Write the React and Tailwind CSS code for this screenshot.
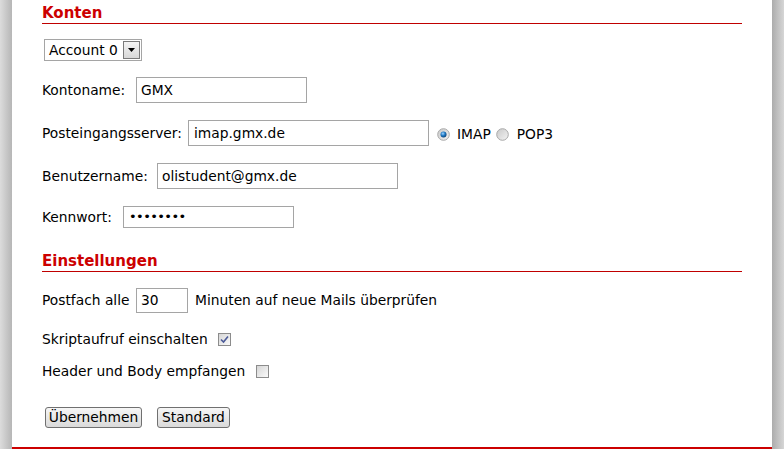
import React from "react";

const font = { fontFamily: '"DejaVu Sans", Verdana, sans-serif' };

function Radio({ checked }) {
  return (
    <svg width="13" height="13" viewBox="0 0 13 13" className="shrink-0">
      <defs>
        <linearGradient id={checked ? "rg1" : "rg2"} x1="0" y1="0" x2="1" y2="1">
          <stop offset="0" stopColor="#c8c8c8" />
          <stop offset="1" stopColor="#f4f4f4" />
        </linearGradient>
        <radialGradient id="rdot" cx="0.4" cy="0.35" r="0.7">
          <stop offset="0" stopColor="#9fd4ff" />
          <stop offset="0.5" stopColor="#1f79c4" />
          <stop offset="1" stopColor="#0c3c6e" />
        </radialGradient>
      </defs>
      <circle cx="6.5" cy="6.5" r="5.8" fill={`url(#${checked ? "rg1" : "rg2"})`} stroke="#a8a8a8" strokeWidth="1" />
      {checked && <circle cx="6.5" cy="6.5" r="3" fill="url(#rdot)" />}
    </svg>
  );
}

function Checkbox({ checked }) {
  return (
    <div className="w-[13px] h-[13px] border border-[#8c8c8c] bg-linear-to-br from-[#d6d6d6] to-[#fafafa] flex items-center justify-center shrink-0">
      {checked && (
        <svg width="9" height="9" viewBox="0 0 9 9">
          <path d="M1 4.5 L3.5 7 L8 1.5" fill="none" stroke="#4b5a98" strokeWidth="1.6" />
        </svg>
      )}
    </div>
  );
}

function Field({ w, h = 26, children, className = "" }) {
  return (
    <div
      className={`border border-[#a5a5a5] bg-white flex items-center pl-[4px] text-black ${className}`}
      style={{ width: w, height: h }}
    >
      {children}
    </div>
  );
}

function Button({ w, children, className = "" }) {
  return (
    <div
      className={`h-[21px] border border-[#707070] rounded-[3px] bg-linear-to-b from-[#f6f6f6] to-[#dadada] flex items-center justify-center text-black ${className}`}
      style={{ width: w }}
    >
      {children}
    </div>
  );
}

export default function App() {
  return (
    <div className="flex w-[784px] h-[449px] bg-white overflow-hidden text-[13.8px] text-black" style={font}>
      <div className="w-[12px] h-full bg-linear-to-r from-[#dcdcdc] to-[#b6b6b6]" />
      <div className="flex-1 h-[449px] border-b-2 border-[#cc0000] px-[30px] flex flex-col">
        <div className="h-[24px] border-b border-[#c00000] pt-[3px] leading-[20px] text-[15px] font-bold text-[#cc0000]">
          Konten
        </div>

        <div className="mt-[15px] ml-[2px] w-[98px] h-[22px] border border-[#a5a5a5] flex items-center justify-between">
          <span className="pl-[4px] pt-[2px] leading-none">Account 0</span>
          <div className="w-[17px] h-[18px] mr-[1px] border border-[#7a7a7a] bg-linear-to-b from-[#f4f4f4] to-[#d8d8d8] flex items-center justify-center">
            <svg width="7" height="4" viewBox="0 0 7 4">
              <path d="M0 0 L7 0 L3.5 4 Z" fill="#000" />
            </svg>
          </div>
        </div>

        <div className="mt-[16px] flex items-center">
          <span className="w-[94px]">Kontoname:</span>
          <Field w={171}>GMX</Field>
        </div>

        <div className="mt-[17px] flex items-center">
          <span className="w-[146px]">Posteingangsserver:</span>
          <Field w={241} className="pl-[5px]">imap.gmx.de</Field>
          <div className="ml-[8px] mt-[2px]"><Radio checked /></div>
          <span className="ml-[7px] mt-[2px]">IMAP</span>
          <div className="ml-[5px] mt-[2px]"><Radio /></div>
          <span className="ml-[8px] mt-[2px]">POP3</span>
        </div>

        <div className="mt-[17px] flex items-center">
          <span className="w-[115px]">Benutzername:</span>
          <Field w={241}>olistudent@gmx.de</Field>
        </div>

        <div className="mt-[17px] flex items-center">
          <span className="w-[81px]">Kennwort:</span>
          <Field w={171} h={22} className="pl-[5px]">
            <span className="text-[13px] tracking-[-0.6px]">••••••••</span>
          </Field>
        </div>

        <div className="mt-[20px] h-[24px] border-b border-[#c00000] pt-[3px] leading-[20px] text-[15px] font-bold text-[#cc0000]">
          Einstellungen
        </div>

        <div className="mt-[16px] flex items-center">
          <span className="w-[94px]">Postfach alle</span>
          <Field w={52} h={25}>30</Field>
          <span className="ml-[7px]">Minuten auf neue Mails überprüfen</span>
        </div>

        <div className="mt-[16px] h-[20px] flex items-center">
          <span className="w-[176px]">Skriptaufruf einschalten</span>
          <Checkbox checked />
        </div>

        <div className="mt-[12px] h-[20px] flex items-center">
          <span className="w-[214px]">Header und Body empfangen</span>
          <Checkbox />
        </div>

        <div className="mt-[26px] flex items-center">
          <Button w={97} className="ml-[3px]">Übernehmen</Button>
          <Button w={73} className="ml-[15px]">Standard</Button>
        </div>
      </div>
      <div className="w-[12px] h-full bg-linear-to-r from-[#acacac] to-[#d6d6d6]" />
    </div>
  );
}
